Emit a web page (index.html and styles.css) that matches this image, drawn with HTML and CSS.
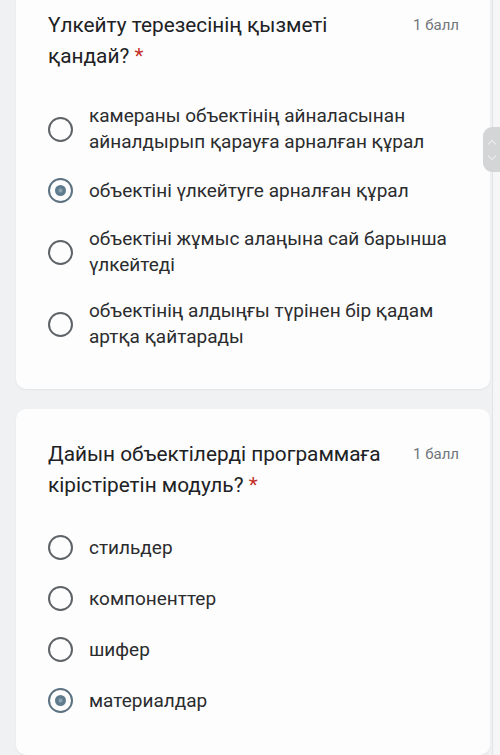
FILE: index.html
```html
<!DOCTYPE html>
<html lang="kk">
<head>
    <meta charset="UTF-8">
    <meta name="viewport" content="width=device-width, initial-scale=1.0">
    <title>Сұрақтар</title>
    <link rel="stylesheet" href="styles.css">
</head>
<body>
    <div class="page">
        <main class="form">
            <!-- 1-сұрақ -->
            <section class="card first">
                <div class="question-head">
                    <h2 class="question-title">Үлкейту терезесінің қызметі қандай?&nbsp;<span class="required">*</span></h2>
                    <div class="points">1 балл</div>
                </div>
                <ul class="options">
                    <li class="option">
                        <span class="radio"></span>
                        <span class="option-text">камераны объектінің айналасынан айналдырып қарауға арналған құрал</span>
                    </li>
                    <li class="option">
                        <span class="radio checked"></span>
                        <span class="option-text">объектіні үлкейтуге арналған құрал</span>
                    </li>
                    <li class="option">
                        <span class="radio"></span>
                        <span class="option-text">объектіні жұмыс алаңына сай барынша үлкейтеді</span>
                    </li>
                    <li class="option">
                        <span class="radio"></span>
                        <span class="option-text">объектінің алдыңғы түрінен бір қадам артқа қайтарады</span>
                    </li>
                </ul>
            </section>

            <!-- 2-сұрақ -->
            <section class="card">
                <div class="question-head">
                    <h2 class="question-title">Дайын объектілерді программаға кірістіретін модуль?&nbsp;<span class="required">*</span></h2>
                    <div class="points">1 балл</div>
                </div>
                <ul class="options">
                    <li class="option">
                        <span class="radio"></span>
                        <span class="option-text">стильдер</span>
                    </li>
                    <li class="option">
                        <span class="radio"></span>
                        <span class="option-text">компоненттер</span>
                    </li>
                    <li class="option">
                        <span class="radio"></span>
                        <span class="option-text">шифер</span>
                    </li>
                    <li class="option">
                        <span class="radio checked"></span>
                        <span class="option-text">материалдар</span>
                    </li>
                </ul>
            </section>
        </main>

        <div class="scroll-track">
            <div class="scroll-thumb">
                <span class="chevron up"></span>
                <span class="chevron down"></span>
            </div>
        </div>
    </div>
</body>
</html>
```

FILE: styles.css
```css
body {
    margin: 0;
    padding: 0;
    background-color: #f0f1f3;
    font-family: Roboto, "Noto Sans", Arial, sans-serif;
    color: #202124;
    overflow: hidden;
}

.page {
    display: flex;
    height: 755px;
}

.form {
    flex: 1;
    padding: 0 2px 0 16px;
    display: flex;
    flex-direction: column;
    gap: 20px;
    margin-top: -20px;
}

.card {
    background-color: #fdfdfd;
    border-radius: 10px;
    box-shadow: 0 1px 2px rgba(0, 0, 0, 0.06);
    padding: 30px 31px 29px 32px;
}

.question-head {
    display: flex;
    align-items: flex-start;
    justify-content: space-between;
    gap: 16px;
}

.question-title {
    margin: 0;
    font-size: 20.8px;
    font-weight: 400;
    line-height: 31px;
    max-width: 350px;
}

.required {
    color: #c5302a;
}

.points {
    font-size: 15px;
    color: #70757a;
    line-height: 31px;
    white-space: nowrap;
}

.options {
    list-style: none;
    margin: 21px 0 0 0;
    padding: 0;
}

.option {
    display: flex;
    align-items: center;
    gap: 16px;
    min-height: 31px;
    padding: 10px 0;
}

.radio {
    flex: none;
    width: 21px;
    height: 21px;
    border: 2.5px solid #5f6368;
    border-radius: 50%;
    display: flex;
    align-items: center;
    justify-content: center;
}

.radio.checked {
    border-color: #5c7280;
}

.radio.checked::after {
    content: "";
    width: 11px;
    height: 11px;
    border-radius: 50%;
    background: radial-gradient(circle, #8fa4b1 0 1.5px, #5f7b8e 2.5px);
}

.option-text {
    font-size: 19px;
    line-height: 26px;
    color: #2b2c2e;
}

.scroll-track {
    flex: none;
    width: 7px;
    border-left: 1px solid #e2e3e5;
    background-color: #f6f6f7;
    position: relative;
}

.scroll-thumb {
    position: absolute;
    top: 127px;
    right: 0;
    width: 17px;
    height: 45px;
    background-color: #d4d5d7;
    border-radius: 9px 0 0 9px;
    display: flex;
    flex-direction: column;
    align-items: center;
    justify-content: center;
    gap: 6px;
}

.chevron {
    width: 5px;
    height: 5px;
    border-left: 1.5px solid #eeeeef;
    border-top: 1.5px solid #eeeeef;
}

.chevron.up {
    transform: rotate(45deg);
    margin-top: 3px;
}

.chevron.down {
    transform: rotate(225deg);
    margin-bottom: 3px;
}
```
